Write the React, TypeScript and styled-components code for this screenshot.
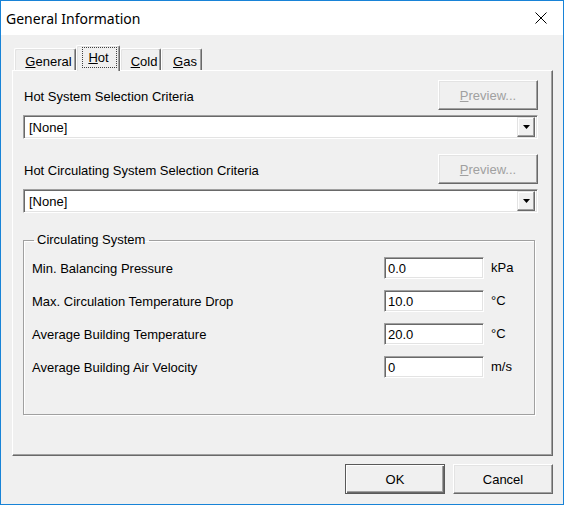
import React from 'react';
import styled, { createGlobalStyle } from 'styled-components';

const GlobalStyle = createGlobalStyle`
  html, body {
    margin: 0;
    padding: 0;
    background: #ffffff;
  }
  body {
    font-family: 'Liberation Sans', Arial, sans-serif;
    font-size: 13px;
    color: #000;
  }
`;

const WindowSC = styled.div`
  width: 564px;
  height: 505px;
  box-sizing: border-box;
  border: 1px solid #1883d7;
  display: flex;
  flex-direction: column;
  background: #f0f0f0;
  box-shadow: 0 1px 0 #c8c8c8;
`;

const TitleBar = styled.div`
  height: 34px;
  flex: none;
  background: #ffffff;
  display: flex;
  align-items: center;
  padding-left: 5px;
`;

const Title = styled.div`
  font-family: 'Noto Sans', 'Open Sans', sans-serif;
  font-size: 14px;
  color: #000;
`;

const CloseButton = styled.div`
  margin-left: auto;
  width: 44px;
  height: 34px;
  display: flex;
  align-items: center;
  justify-content: center;
`;

const Body = styled.div`
  flex: 1;
  display: flex;
  flex-direction: column;
  padding: 10px 10px 0 11px;
`;

const TabStrip = styled.div`
  height: 25px;
  display: flex;
  align-items: flex-end;
  padding-left: 2px;
`;

const TabSC = styled.div<{ $width: number; $selected?: boolean }>`
  position: relative;
  z-index: ${(p) => (p.$selected ? 1 : 0)};
  box-sizing: border-box;
  width: ${(p) => p.$width}px;
  height: ${(p) => (p.$selected ? 26 : 22)}px;
  margin-bottom: ${(p) => (p.$selected ? -1 : 0)}px;
  background: #f0f0f0;
  border-top: 1px solid #ffffff;
  border-left: 1px solid #ffffff;
  border-right: 1px solid #696969;
  border-top-left-radius: 2px;
  border-top-right-radius: 2px;
  box-shadow: inset -1px 0 0 #a0a0a0, inset 1px 1px 0 #e3e3e3;
  display: flex;
  align-items: center;
  justify-content: center;
  padding: ${(p) => (p.$selected ? '0 0 3px 3px' : '3px 0 0 7px')};
  white-space: nowrap;
`;

const FocusRect = styled.span`
  border: 1px dotted #404040;
  padding: 2px 7px 2px 5px;
  line-height: 15px;
`;

const Panel = styled.div`
  height: 386px;
  box-sizing: border-box;
  border: 1px solid;
  border-color: #ffffff #696969 #696969 #ffffff;
  box-shadow: inset -1px -1px 0 #a0a0a0;
  padding: 9px 14px 0 10px;
  display: flex;
  flex-direction: column;
`;

const CriteriaRow = styled.div<{ $first?: boolean }>`
  display: flex;
  align-items: center;
  justify-content: space-between;
  height: 30px;
  margin-top: ${(p) => (p.$first ? 0 : 15)}px;
`;

const FieldLabel = styled.div`
  padding-left: 1px;
  margin-top: 3px;
`;

const PushButton = styled.button<{ $default?: boolean }>`
  width: 100px;
  height: 30px;
  box-sizing: border-box;
  margin: 0;
  padding: 0;
  font-family: 'Liberation Sans', Arial, sans-serif;
  font-size: 13px;
  color: #000;
  background: #f0f0f0;
  border: 1px solid;
  border-color: ${(p) =>
    p.$default ? '#595959' : '#ffffff #696969 #696969 #ffffff'};
  box-shadow: ${(p) =>
    p.$default
      ? 'inset 1px 1px 0 #ffffff, inset -1px -1px 0 #696969, inset -2px -2px 0 #a0a0a0'
      : 'inset -1px -1px 0 #a0a0a0, inset 1px 1px 0 #e3e3e3'};
  &:disabled {
    color: #a0a0a0;
  }
`;

const sunken = `
  box-sizing: border-box;
  background: #ffffff;
  border: 1px solid;
  border-color: #a0a0a0 #ffffff #ffffff #a0a0a0;
  box-shadow: inset 1px 1px 0 #696969, inset -1px -1px 0 #e3e3e3;
`;

const ComboBox = styled.div`
  ${sunken}
  height: 24px;
  margin-top: 5px;
  display: flex;
  align-items: center;
  padding: 2px 2px 2px 5px;
`;

const ComboValue = styled.div`
  flex: 1;
`;

const DropButton = styled.div`
  width: 18px;
  height: 20px;
  box-sizing: border-box;
  background: #f0f0f0;
  border: 1px solid;
  border-color: #e3e3e3 #696969 #696969 #e3e3e3;
  box-shadow: inset -1px -1px 0 #a0a0a0, inset 1px 1px 0 #ffffff;
  display: flex;
  align-items: center;
  justify-content: center;
`;

const GroupBox = styled.fieldset`
  margin: 19px 3px 0 0;
  padding: 9px 6px 36px 8px;
  min-inline-size: 0;
  border: 1px solid #a0a0a0;
  box-shadow: 1px 1px 0 #ffffff, inset 1px 1px 0 #ffffff;
  display: grid;
  grid-template-columns: 1fr 100px 44px;
  row-gap: 11px;
  align-items: center;
`;

const Legend = styled.legend`
  margin-left: 2px;
  padding: 0 4px 0 3px;
  line-height: 16px;
`;

const RowLabel = styled.div`
  margin-top: 1px;
`;

const TextBox = styled.div`
  ${sunken}
  height: 22px;
  display: flex;
  align-items: center;
  padding: 1px 3px 0 3px;
`;

const Unit = styled.div`
  padding-left: 7px;
  margin-top: -2px;
`;

const Footer = styled.div`
  display: flex;
  justify-content: flex-end;
  gap: 8px;
  margin-top: 8px;
`;

const Arrow = () => (
  <svg width="7" height="4" viewBox="0 0 7 4">
    <path d="M0 0h7L3.5 4z" fill="#000" />
  </svg>
);

const CloseIcon = () => (
  <svg width="12" height="12" viewBox="0 0 12 12">
    <path d="M0.5 0.5L11.5 11.5M11.5 0.5L0.5 11.5" stroke="#000" strokeWidth="1" />
  </svg>
);

const tabs = [
  { key: 'g', first: 'G', rest: 'eneral', width: 62 },
  { key: 'h', first: 'H', rest: 'ot', width: 44, selected: true },
  { key: 'c', first: 'C', rest: 'old', width: 41 },
  { key: 's', first: 'G', rest: 'as', width: 41 },
];

const rows = [
  { label: 'Min. Balancing Pressure', value: '0.0', unit: 'kPa' },
  { label: 'Max. Circulation Temperature Drop', value: '10.0', unit: '°C' },
  { label: 'Average Building Temperature', value: '20.0', unit: '°C' },
  { label: 'Average Building Air Velocity', value: '0', unit: 'm/s' },
];

const Criteria = ({ label, first }: { label: string; first?: boolean }) => (
  <>
    <CriteriaRow $first={first}>
      <FieldLabel>{label}</FieldLabel>
      <PushButton disabled>
        <u>P</u>review...
      </PushButton>
    </CriteriaRow>
    <ComboBox>
      <ComboValue>[None]</ComboValue>
      <DropButton>
        <Arrow />
      </DropButton>
    </ComboBox>
  </>
);

export default function App() {
  return (
    <>
      <GlobalStyle />
      <WindowSC>
        <TitleBar>
          <Title>General Information</Title>
          <CloseButton>
            <CloseIcon />
          </CloseButton>
        </TitleBar>
        <Body>
          <TabStrip>
            {tabs.map((t) => (
              <TabSC key={t.key} $width={t.width} $selected={t.selected}>
                {t.selected ? (
                  <FocusRect>
                    <u>{t.first}</u>
                    {t.rest}
                  </FocusRect>
                ) : (
                  <span>
                    <u>{t.first}</u>
                    {t.rest}
                  </span>
                )}
              </TabSC>
            ))}
          </TabStrip>
          <Panel>
            <Criteria label="Hot System Selection Criteria" first />
            <Criteria label="Hot Circulating System Selection Criteria" />
            <GroupBox>
              <Legend>Circulating System</Legend>
              {rows.map((r) => (
                <React.Fragment key={r.label}>
                  <RowLabel>{r.label}</RowLabel>
                  <TextBox>{r.value}</TextBox>
                  <Unit>{r.unit}</Unit>
                </React.Fragment>
              ))}
            </GroupBox>
          </Panel>
          <Footer>
            <PushButton $default>OK</PushButton>
            <PushButton>Cancel</PushButton>
          </Footer>
        </Body>
      </WindowSC>
    </>
  );
}
